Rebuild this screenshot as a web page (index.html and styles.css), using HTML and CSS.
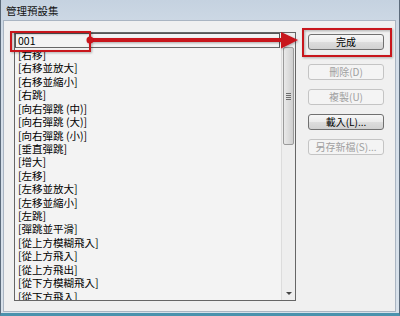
FILE: index.html
```html
<!DOCTYPE html>
<html>
<head>
<meta charset="utf-8">
<link rel="stylesheet" href="styles.css">
</head>
<body>
<div class="window">
  <div class="titlebar">管理預設集</div>
  <div class="content">
    <div class="list">
      <div class="list-main">
        <div class="edit">001</div>
        <div class="items">
          <div>[右移]</div>
          <div>[右移並放大]</div>
          <div>[右移並縮小]</div>
          <div>[右跳]</div>
          <div>[向右彈跳 (中)]</div>
          <div>[向右彈跳 (大)]</div>
          <div>[向右彈跳 (小)]</div>
          <div>[垂直彈跳]</div>
          <div>[增大]</div>
          <div>[左移]</div>
          <div>[左移並放大]</div>
          <div>[左移並縮小]</div>
          <div>[左跳]</div>
          <div>[彈跳並平滑]</div>
          <div>[從上方模糊飛入]</div>
          <div>[從上方飛入]</div>
          <div>[從上方飛出]</div>
          <div>[從下方模糊飛入]</div>
          <div>[從下方飛入]</div>
        </div>
      </div>
      <div class="scrollbar">
        <div class="sb-btn"><span class="tri-up"></span></div>
        <div class="thumb"><span class="grip"></span></div>
        <div class="sb-track"></div>
        <div class="sb-btn"><span class="tri-down"></span></div>
      </div>
    </div>
    <div class="buttons">
      <div class="btn">完成</div>
      <div class="btn disabled gap-lg">刪除(D)</div>
      <div class="btn disabled">複製(U)</div>
      <div class="btn">載入(L)...</div>
      <div class="btn disabled">另存新檔(S)...</div>
    </div>
  </div>
  <svg class="overlay" width="400" height="316" viewBox="0 0 400 316">
    <defs>
      <filter id="sh" x="-10%" y="-30%" width="130%" height="170%">
        <feDropShadow dx="1" dy="1" stdDeviation="1" flood-color="#000" flood-opacity="0.3"/>
      </filter>
    </defs>
    <g filter="url(#sh)">
      <rect x="11" y="32" width="79" height="19" fill="none" stroke="#c8121c" stroke-width="2"/>
      <rect x="303" y="29" width="88" height="27" fill="none" stroke="#c8121c" stroke-width="2"/>
      <rect x="90" y="38" width="193" height="4" fill="#c8121c"/>
      <circle cx="90" cy="40" r="3.5" fill="#c8121c"/>
      <polygon points="281,32 298,40 281,48.5" fill="#c8121c"/>
    </g>
  </svg>
</div>
</body>
</html>
```

FILE: styles.css
```css
html, body {
  margin: 0;
  padding: 0;
}

body {
  width: 400px;
  height: 316px;
  overflow: hidden;
  font-family: "Noto Sans CJK TC", "Noto Sans", sans-serif;
}

.window {
  position: relative;
  width: 400px;
  height: 316px;
  box-sizing: border-box;
  border-left: 1px solid #5c6b7b;
  border-right: 1px solid #5c6b7b;
  border-bottom: 3px solid #4a92ad;
  padding: 0 3px 1px 2px;
  background: linear-gradient(#c5d2e0, #d3dde8 40px, #d8e1ea);
  display: flex;
  flex-direction: column;
}

.titlebar {
  height: 20px;
  padding-left: 3px;
  font-size: 10.5px;
  line-height: 21px;
  color: #111;
  flex: none;
}

.content {
  flex: 1;
  background: #f0f0f0;
  border: 1px solid #aab5c2;
  display: flex;
  align-items: flex-start;
  padding: 11px 0 0 10px;
  min-height: 0;
}

.list {
  width: 282px;
  height: 269px;
  box-sizing: border-box;
  border: 1px solid #666;
  background: #f3f3f3;
  display: flex;
  flex: none;
}

.list-main {
  flex: 1;
  display: flex;
  flex-direction: column;
  overflow: hidden;
  min-width: 0;
}

.edit {
  height: 15px;
  box-sizing: border-box;
  border: 1px solid #555;
  border-bottom-color: #666;
  margin-right: 1px;
  padding-left: 2px;
  font-size: 10.5px;
  line-height: 13px;
  color: #000;
  flex: none;
  background: #f3f3f3;
}

.items {
  flex: 1;
  overflow: hidden;
  padding-left: 3px;
  font-size: 10.5px;
  line-height: 13.42px;
  color: #000;
  white-space: nowrap;
}

.scrollbar {
  width: 14px;
  box-sizing: border-box;
  border-left: 1px solid #dcdcdc;
  background: #eeeeee;
  display: flex;
  flex-direction: column;
  flex: none;
}

.sb-btn {
  height: 14px;
  flex: none;
  display: flex;
  align-items: center;
  justify-content: center;
}

.tri-up, .tri-down {
  width: 0;
  height: 0;
  border-left: 3px solid transparent;
  border-right: 3px solid transparent;
}

.tri-up {
  border-bottom: 3px solid #444;
}

.tri-down {
  border-top: 3px solid #444;
  margin-top: 1px;
}

.thumb {
  height: 98px;
  margin: 0 1px;
  box-sizing: border-box;
  border: 1px solid #9a9a9a;
  border-radius: 2px;
  background: linear-gradient(90deg, #e9e9e9, #dcdcdc 50%, #cfcfcf);
  display: flex;
  align-items: center;
  justify-content: center;
  flex: none;
}

.grip {
  width: 5px;
  height: 7px;
  background: repeating-linear-gradient(#6d6d6d 0 1px, transparent 1px 2px);
}

.sb-track {
  flex: 1;
}

.buttons {
  width: 76px;
  margin-left: 12px;
  padding-top: 2px;
  display: flex;
  flex-direction: column;
  gap: 9px;
  flex: none;
}

.btn {
  height: 16px;
  box-sizing: border-box;
  border: 1px solid #707070;
  border-radius: 3px;
  background: linear-gradient(#f7f7f7, #ebebeb 50%, #dddddd 51%, #d1d1d1);
  font-size: 10px;
  line-height: 14px;
  text-align: center;
  color: #000;
}

.btn.disabled {
  border-color: #c4c4c4;
  background: #f4f4f4;
  color: #a0a0a0;
}

.btn.gap-lg {
  margin-top: 5px;
}

.overlay {
  position: absolute;
  left: -1px;
  top: 0;
  pointer-events: none;
}
```
